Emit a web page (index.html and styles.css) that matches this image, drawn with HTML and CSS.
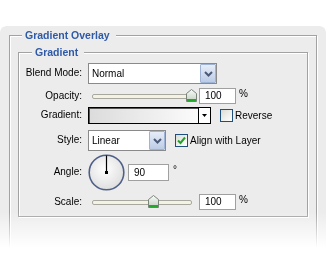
FILE: index.html
```html
<!DOCTYPE html>
<html lang="en">
<head>
    <meta charset="UTF-8">
    <meta name="viewport" content="width=device-width, initial-scale=1.0">
    <title>Gradient Overlay</title>
    <link rel="stylesheet" href="styles.css">
</head>
<body>
    <div class="panel">
        <fieldset class="group outer">
            <legend>Gradient Overlay</legend>
            <fieldset class="group inner">
                <legend>Gradient</legend>

                <div class="row row-blend">
                    <span class="label">Blend Mode:</span>
                    <div class="select select-blend">
                        <span class="select-text">Normal</span>
                        <span class="select-btn">
                            <svg width="9" height="6" viewBox="0 0 9 6"><path d="M1 1 L4.5 4.5 L8 1" fill="none" stroke="#4b5a78" stroke-width="2"/></svg>
                        </span>
                    </div>
                </div>

                <div class="row row-opacity">
                    <span class="label">Opacity:</span>
                    <div class="slider">
                        <div class="track"></div>
                        <svg class="thumb" style="left: 98px" width="11" height="13" viewBox="0 0 11 13">
                            <defs>
                                <linearGradient id="tg1" x1="0" y1="0" x2="0" y2="1">
                                    <stop offset="0" stop-color="#fafcfa"/>
                                    <stop offset="1" stop-color="#c2cec2"/>
                                </linearGradient>
                            </defs>
                            <path d="M5.5 0.5 L10.5 4.5 L10.5 12.5 L0.5 12.5 L0.5 4.5 Z" fill="url(#tg1)" stroke="#7a857a"/>
                            <rect x="1" y="10" width="9" height="2.5" fill="#1faa2a"/>
                        </svg>
                    </div>
                    <span class="num">100</span>
                    <span class="unit">%</span>
                </div>

                <div class="row row-gradient">
                    <span class="label">Gradient:</span>
                    <div class="gradient">
                        <span class="gradient-fill"></span>
                        <span class="gradient-btn">
                            <svg width="5" height="3" viewBox="0 0 5 3"><path d="M0 0 H5 L2.5 3 Z" fill="#000"/></svg>
                        </span>
                    </div>
                    <span class="check"></span>
                    <span class="check-text">Reverse</span>
                </div>

                <div class="row row-style">
                    <span class="label">Style:</span>
                    <div class="select select-style">
                        <span class="select-text">Linear</span>
                        <span class="select-btn">
                            <svg width="9" height="6" viewBox="0 0 9 6"><path d="M1 1 L4.5 4.5 L8 1" fill="none" stroke="#4b5a78" stroke-width="2"/></svg>
                        </span>
                    </div>
                    <span class="check checked">
                        <svg width="11" height="11" viewBox="0 0 11 11"><path d="M2 5.5 L4.5 8 L9 2.5" fill="none" stroke="#21a32a" stroke-width="2"/></svg>
                    </span>
                    <span class="check-text">Align with Layer</span>
                </div>

                <div class="row row-angle">
                    <span class="label">Angle:</span>
                    <svg class="dial" width="37" height="37" viewBox="0 0 37 37">
                        <defs>
                            <radialGradient id="dg" cx="0.45" cy="0.4" r="0.65">
                                <stop offset="0" stop-color="#ffffff"/>
                                <stop offset="1" stop-color="#dcdcdc"/>
                            </radialGradient>
                        </defs>
                        <circle cx="18.5" cy="18.5" r="17.3" fill="url(#dg)" stroke="#4f5f88" stroke-width="1.6"/>
                        <line x1="18.5" y1="18.5" x2="18.5" y2="1.5" stroke="#000" stroke-width="1.2"/>
                        <rect x="17" y="17" width="3" height="3" fill="#000"/>
                    </svg>
                    <span class="num num-angle">90</span>
                    <span class="unit unit-deg">°</span>
                </div>

                <div class="row row-scale">
                    <span class="label">Scale:</span>
                    <div class="slider">
                        <div class="track"></div>
                        <svg class="thumb" style="left: 60px" width="11" height="13" viewBox="0 0 11 13">
                            <defs>
                                <linearGradient id="tg2" x1="0" y1="0" x2="0" y2="1">
                                    <stop offset="0" stop-color="#fafcfa"/>
                                    <stop offset="1" stop-color="#c2cec2"/>
                                </linearGradient>
                            </defs>
                            <path d="M5.5 0.5 L10.5 4.5 L10.5 12.5 L0.5 12.5 L0.5 4.5 Z" fill="url(#tg2)" stroke="#7a857a"/>
                            <rect x="1" y="10" width="9" height="2.5" fill="#1faa2a"/>
                        </svg>
                    </div>
                    <span class="num">100</span>
                    <span class="unit">%</span>
                </div>
            </fieldset>
        </fieldset>
    </div>
</body>
</html>
```

FILE: styles.css
```css
body {
    margin: 0;
    background-color: #fff;
    font-family: "Liberation Sans", Arial, sans-serif;
    font-size: 10px;
    color: #000;
}

.panel {
    margin-top: 26px;
    padding-top: 3px;
    height: 241px;
    box-sizing: border-box;
    background-color: #ececec;
    border-radius: 6px 6px 0 0;
    -webkit-mask-image: linear-gradient(to bottom, #000 186px, transparent 222px);
    mask-image: linear-gradient(to bottom, #000 186px, transparent 222px);
}

.group {
    margin: 0;
    padding: 0;
    min-width: 0;
    border: 1px solid #a2a2a2;
    box-shadow: 1px 1px 0 #fff, inset 1px 1px 0 #fff;
}

.group legend {
    font-size: 10.5px;
    font-weight: bold;
    line-height: 13px;
    color: #2e5aa8;
    background-color: #ececec;
}

.outer {
    margin: 0 9px;
    padding: 4px 8px 40px 8px;
}

.outer > legend {
    margin-left: 4px;
    padding: 0 6px 0 3px;
}

.inner {
    padding: 4px 0 6px 0;
}

.inner > legend {
    margin-left: 13px;
    padding: 0 6px 0 3px;
}

.row {
    display: flex;
    align-items: center;
}

.row-blend { height: 21px; }
.row-opacity { height: 16px; margin-top: 4px; }
.row-gradient { height: 17px; margin-top: 3px; }
.row-style { height: 21px; margin-top: 6px; }
.row-angle { height: 37px; margin-top: 3px; }
.row-scale { height: 16px; margin-top: 3px; }

.label {
    flex: none;
    width: 63px;
    margin-right: 6px;
    text-align: right;
    margin-top: -2px;
}

/* dropdowns */
.select {
    display: flex;
    height: 21px;
    box-sizing: border-box;
    border: 1px solid #8a8a8a;
    background-color: #fff;
}

.select-blend { width: 129px; }
.select-style { width: 78px; }

.select-text {
    flex: 1;
    padding-left: 3px;
    line-height: 19px;
}

.select-btn {
    width: 16px;
    box-sizing: border-box;
    border: 1px solid #9fb3d6;
    border-radius: 1px;
    background: linear-gradient(#e6edf8, #bccbe6);
    display: flex;
    align-items: center;
    justify-content: center;
}

/* sliders */
.slider {
    position: relative;
    flex: none;
    width: 111px;
    height: 16px;
    display: flex;
    align-items: center;
}

.track {
    width: 98px;
    height: 3px;
    margin-left: 4px;
    border: 1px solid #a8a8a0;
    border-radius: 2px;
    background-color: #f4f2e3;
}

.thumb {
    position: absolute;
    top: 1px;
}

.num {
    flex: none;
    width: 37px;
    height: 16px;
    box-sizing: border-box;
    border: 1px solid #a0a0a0;
    background-color: #fff;
    padding-left: 5px;
    line-height: 14px;
}

.num-angle {
    width: 41px;
    height: 17px;
    line-height: 15px;
    margin-left: 3px;
}

.unit {
    align-self: flex-start;
    line-height: 12px;
    margin-left: 3px;
}

.unit-deg {
    margin-top: 10px;
    margin-left: 4px;
}

/* gradient picker */
.gradient {
    display: flex;
    width: 123px;
    height: 17px;
    box-sizing: border-box;
    border: 1px solid #000;
    box-shadow: inset 1px 1px 0 #555;
}

.gradient-fill {
    flex: 1;
    margin: 1px 0 0 1px;
    background: linear-gradient(to right, #dcdcdc, #fbfbfb);
}

.gradient-btn {
    width: 11px;
    border-left: 1px solid #000;
    background-color: #fff;
    display: flex;
    align-items: center;
    justify-content: center;
}

/* checkboxes */
.check {
    flex: none;
    width: 13px;
    height: 13px;
    box-sizing: border-box;
    margin-left: 9px;
    border: 1px solid #1f4f7f;
    background: linear-gradient(135deg, #dcdcd6, #fff);
    display: flex;
    align-items: center;
    justify-content: center;
}

.check-text {
    margin-left: 2px;
}

.dial {
    flex: none;
}
```
